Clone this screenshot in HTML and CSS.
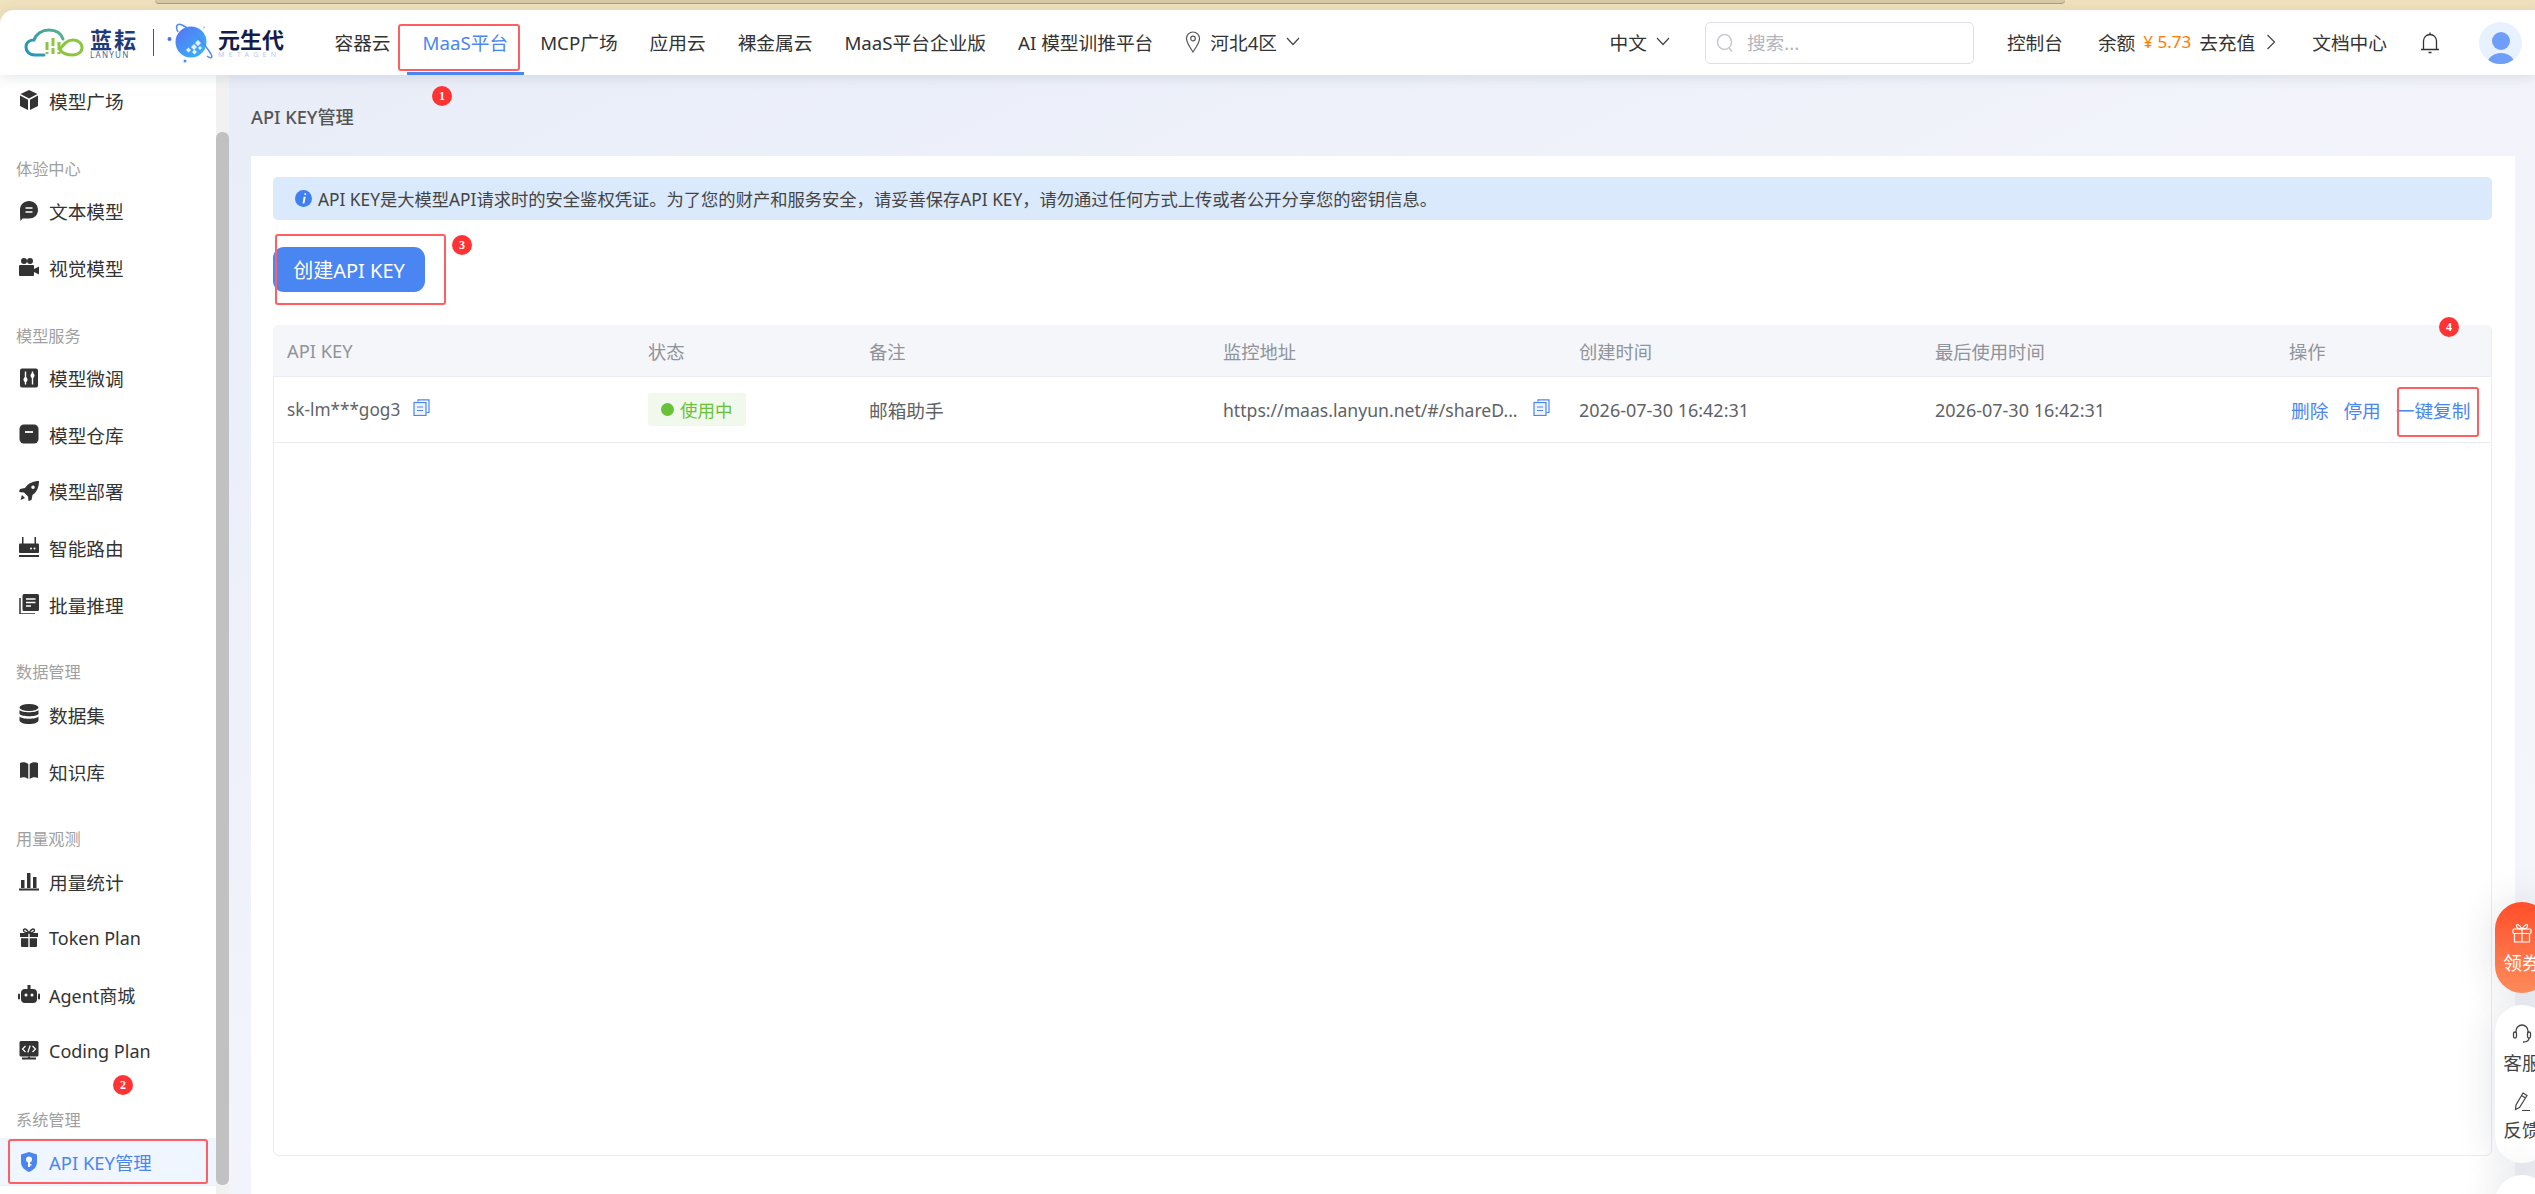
FILE: index.html
```html
<!DOCTYPE html>
<html lang="zh-CN">
<head>
    <meta charset="utf-8">
    <title>API KEY管理</title>
    <link rel="stylesheet" href="styles.css">
</head>
<body>
<div class="topstrip"><div class="topstrip_tab"></div></div>

<header class="header">
    <div class="logo">
        <svg class="logo_cloud" width="60" height="30" viewBox="0 0 60 30" fill="none">
            <path d="M20 27H11C5 27 2 23 2 19C2 14 6 12 10 12C12 6 18 2 25 2C32 2 37 5 39 11" stroke="url(#cloudgrad)" stroke-width="3" stroke-linecap="round"/>
            <path d="M36 22C39 26 44 27 49 27C54 27 58 24 58 19.500C58 15 54 12 49 12C43 12 40 16 36 21" stroke="#8cc63f" stroke-width="3" stroke-linecap="round"/>
            <path d="M23 14V26M29 10V26M35 14V26" stroke="#8cc63f" stroke-width="3" stroke-dasharray="8 2"/>
            <defs>
                <linearGradient id="cloudgrad" x1="0" y1="30" x2="40" y2="0" gradientUnits="userSpaceOnUse">
                    <stop stop-color="#1c8fc0"/><stop offset="1" stop-color="#5db58a"/>
                </linearGradient>
            </defs>
        </svg>
        <div class="logo_word">
            <span class="logo_cn">蓝耘</span>
            <span class="logo_en">LANYUN</span>
        </div>
        <div class="logo_line"></div>
        <svg class="logo_planet" width="46" height="40" viewBox="0 0 46 40" fill="none">
            <defs>
                <linearGradient id="planetgrad" x1="8" y1="4" x2="36" y2="34" gradientUnits="userSpaceOnUse">
                    <stop stop-color="#5a6ff5"/><stop offset="1" stop-color="#35b6f5"/>
                </linearGradient>
            </defs>
            <circle cx="24" cy="19" r="15.500" fill="url(#planetgrad)"/>
            <path d="M11 9C8 3 10 0 15 2C24 6 38 21 44 31C46 35 44 36 40 33" stroke="#4d8bf5" stroke-width="1.500"/>
            <path d="M28 20l3-3 3 3-3 3zM24 24l3-3 3 3-3 3zM19 27l2.500-2.500 2.500 2.500-2.500 2.500zM25 29l2.500-2.500 2.500 2.500-2.500 2.500zM31 25l2-2 2 2-2 2z" fill="#fff" opacity=".85"/>
            <circle cx="2.500" cy="16" r="2" fill="#4d6ff5"/>
            <circle cx="18" cy="38" r="1.500" fill="#4d8bf5"/>
            <circle cx="37" cy="4.500" r="1" fill="#7fd0f5"/>
        </svg>
        <div class="logo_word logo_word2">
            <span class="logo_cn2">元生代</span>
            <span class="logo_en2">METAGEN</span>
        </div>
    </div>

    <nav class="nav">
        <a class="nav_item">容器云</a>
        <a class="nav_item nav_active">MaaS平台</a>
        <a class="nav_item">MCP广场</a>
        <a class="nav_item">应用云</a>
        <a class="nav_item">裸金属云</a>
        <a class="nav_item">MaaS平台企业版</a>
        <a class="nav_item">AI 模型训推平台</a>
        <a class="nav_item nav_region">
            <svg width="16" height="24" viewBox="0 0 16 24" fill="none" stroke="#555" stroke-width="1.200"><path d="M8 22C4 16 1.500 12.500 1.500 8.500A6.500 6.500 0 0 1 14.500 8.500C14.500 12.500 12 16 8 22Z"/><circle cx="8" cy="8.500" r="2.300"/></svg>
            <span>河北4区</span>
            <svg class="chevron" width="14" height="9" viewBox="0 0 14 9" fill="none" stroke="#444" stroke-width="1.200"><path d="M1 1l6 6.500L13 1"/></svg>
        </a>
    </nav>

    <div class="header_right">
        <div class="lang">
            <span>中文</span>
            <svg width="14" height="9" viewBox="0 0 14 9" fill="none" stroke="#444" stroke-width="1.200"><path d="M1 1l6 6.500L13 1"/></svg>
        </div>
        <div class="search">
            <svg width="18" height="20" viewBox="0 0 18 20" fill="none" stroke="#c8c9d0" stroke-width="1.500"><ellipse cx="8.500" cy="9" rx="7" ry="7.500"/><path d="M13 15l3 3.500"/></svg>
            <span>搜索...</span>
        </div>
        <a class="head_link">控制台</a>
        <div class="balance">
            <span>余额</span>
            <span class="balance_num">¥ 5.73</span>
            <span>去充值</span>
            <svg width="10" height="20" viewBox="0 0 10 20" fill="none" stroke="#444" stroke-width="1.200"><path d="M1.500 3l7 7-7 7"/></svg>
        </div>
        <a class="head_link head_docs">文档中心</a>
        <svg class="bell" width="20" height="22" viewBox="0 0 20 22" fill="none" stroke="#333" stroke-width="1.300"><path d="M3.500 17V9A6.500 6.500 0 0 1 16.500 9V17M1 17.500H19"/><path d="M10 .5V2.500M8.500 20.500H11.500"/></svg>
        <div class="avatar"><span class="avatar_head"></span><span class="avatar_body"></span></div>
    </div>
</header>

<div class="layout">
    <aside class="sidebar">
        <div class="menu">
            <a class="menu_item">
                <svg width="20" height="20" viewBox="0 0 20 20" fill="#333"><path d="M10 0l8.500 4L10 8.500 1.500 4zM1 5.500l8 4.300V20l-8-4zM19 5.500l-8 4.300V20l8-4z"/></svg>
                模型广场
            </a>
            <div class="menu_head">体验中心</div>
            <a class="menu_item">
                <svg width="20" height="20" viewBox="0 0 20 20"><path d="M10 0C15 0 19 3.500 19 9C19 14 15 17.500 10 17.500H3.500L1.500 20C1 17 1 12 1 9C1 3.500 5 0 10 0Z" fill="#333"/><path d="M6.500 7h7M6.500 11h7" stroke="#fff" stroke-width="1.600"/></svg>
                文本模型
            </a>
            <a class="menu_item">
                <svg width="20" height="20" viewBox="0 0 20 20" fill="#333"><circle cx="5" cy="4" r="3"/><circle cx="11" cy="4" r="3"/><rect x="0" y="8" width="15" height="11" rx="1"/><path d="M15 12l5-2.500v8L15 15z"/></svg>
                视觉模型
            </a>
            <div class="menu_head">模型服务</div>
            <a class="menu_item">
                <svg width="20" height="20" viewBox="0 0 20 20"><rect x="1" y="0.500" width="18" height="19" rx="2" fill="#333"/><path d="M6.500 3.500v13M13.500 3.500v13" stroke="#fff" stroke-width="1.400"/><ellipse cx="6.500" cy="11.500" rx="2" ry="2.500" fill="#fff"/><ellipse cx="13.500" cy="7.500" rx="2" ry="2.500" fill="#fff"/></svg>
                模型微调
            </a>
            <a class="menu_item">
                <svg width="20" height="20" viewBox="0 0 20 20"><rect x="0.500" y="0.500" width="19" height="19" rx="4.500" fill="#333"/><path d="M6 8h8" stroke="#fff" stroke-width="1.800"/></svg>
                模型仓库
            </a>
            <a class="menu_item">
                <svg width="20" height="20" viewBox="0 0 20 20" fill="#333"><path d="M20 0C14 0 9.500 2 6 7L1 8l-1 3 5 0.500 4 4 0.500 4.500 3-1 1-5C18 11 20 6 20 0ZM14 4.500A1.700 1.700 0 1 1 14 8A1.700 1.700 0 0 1 14 4.500Z"/><path d="M3 14l3 3-4.500 2z"/></svg>
                模型部署
            </a>
            <a class="menu_item">
                <svg width="20" height="20" viewBox="0 0 20 20" fill="#333"><rect x="0" y="6.500" width="20" height="9.500" rx="1"/><rect x="3" y="0" width="1.500" height="7"/><rect x="15.500" y="0" width="1.500" height="7"/><rect x="0" y="18" width="20" height="2"/><circle cx="12" cy="11.500" r="1" fill="#fff"/><circle cx="15.500" cy="11.500" r="1" fill="#fff"/></svg>
                智能路由
            </a>
            <a class="menu_item">
                <svg width="20" height="20" viewBox="0 0 20 20"><path d="M1 4v16h15" fill="none" stroke="#333" stroke-width="1.500"/><rect x="3.500" y="0" width="16.500" height="17" rx="1.500" fill="#333"/><path d="M7 5h9.500M7 8.500h9.500M7 12h5" stroke="#fff" stroke-width="1.500"/></svg>
                批量推理
            </a>
            <div class="menu_head">数据管理</div>
            <a class="menu_item">
                <svg width="20" height="20" viewBox="0 0 20 20" fill="#333"><ellipse cx="10" cy="3.500" rx="9.500" ry="3.500"/><path d="M.5 6c2 3 17 3 19 0v4c-2 3-17 3-19 0zM.5 12.500c2 3 17 3 19 0V16c0 2.500-4 4-9.500 4S.5 18.500.5 16z"/></svg>
                数据集
            </a>
            <a class="menu_item">
                <svg width="20" height="20" viewBox="0 0 20 20" fill="#333"><path d="M9.300 3C7 1 3 1 1 2V17C3 16 7 16 9.300 18ZM10.700 3C13 1 17 1 19 2V17C17 16 13 16 10.700 18Z"/></svg>
                知识库
            </a>
            <div class="menu_head">用量观测</div>
            <a class="menu_item">
                <svg width="20" height="20" viewBox="0 0 20 20" fill="#333"><rect x="2" y="9" width="3.500" height="8"/><rect x="8" y="2" width="3.500" height="15"/><rect x="14" y="6" width="3.500" height="11"/><rect x="0" y="17.500" width="20" height="2"/></svg>
                用量统计
            </a>
            <a class="menu_item menu_en">
                <svg width="20" height="20" viewBox="0 0 20 20" fill="#333"><path d="M1 5h8.300v4H1zM10.700 5H19v4h-8.300zM2 10.300h7.300V19H3a1 1 0 0 1-1-1zM10.700 10.300H18V18a1 1 0 0 1-1 1h-6.300z"/><path d="M10 5C8 1 5 0 4.500 2S7 4.500 10 5C13 4.500 16 4 15.500 2S12 1 10 5Z" fill="none" stroke="#333" stroke-width="1.400"/></svg>
                Token Plan
            </a>
            <a class="menu_item menu_en">
                <svg class="icon_wide" width="22" height="20" viewBox="0 0 22 20" fill="#333"><rect x="3" y="4" width="16" height="14" rx="4"/><rect x="9.500" y="0" width="3" height="4"/><rect x="0" y="8.500" width="2" height="6" rx="1"/><rect x="20" y="8.500" width="2" height="6" rx="1"/><circle cx="8" cy="10" r="1.500" fill="#fff"/><circle cx="14" cy="10" r="1.500" fill="#fff"/></svg>
                Agent商城
            </a>
            <a class="menu_item menu_en">
                <svg width="20" height="20" viewBox="0 0 20 20"><rect x="0.500" y="0" width="19" height="15.500" rx="1.500" fill="#333"/><path d="M6.500 5L3.500 8l3 3M13.500 5l3 3-3 3M11.200 4.500l-2.400 7" fill="none" stroke="#fff" stroke-width="1.200"/><path d="M3 17.500h14M10 15.500v2" stroke="#333" stroke-width="1.800"/></svg>
                Coding Plan
            </a>
            <div class="menu_head">系统管理</div>
            <a class="menu_item menu_active">
                <svg width="20" height="20" viewBox="0 0 20 20"><path d="M10 0L18 2.500V10C18 15 14.500 18 10 20C5.500 18 2 15 2 10V2.500Z" fill="#4a86f1"/><circle cx="10" cy="7.500" r="3" fill="#fff"/><path d="M9 9h2v6H9zM10 12h2.500v1.500H10z" fill="#fff"/></svg>
                API KEY管理
            </a>
        </div>
    </aside>
    <div class="scrollbar"><div class="scrollbar_thumb"></div></div>

    <main class="main">
        <div class="page_title">API KEY管理</div>
        <section class="card">
            <div class="alert">
                <svg width="17" height="17" viewBox="0 0 17 17"><circle cx="8.500" cy="8.500" r="8.500" fill="#3f7ff0"/><path d="M9.500 3.200h1.600v1.800H9.500zM8.700 6.800h2l-1.300 6.800h-1.800z" fill="#fff"/></svg>
                <span>API KEY是大模型API请求时的安全鉴权凭证。为了您的财产和服务安全，请妥善保存API KEY，请勿通过任何方式上传或者公开分享您的密钥信息。</span>
            </div>
            <button class="btn_create">创建API KEY</button>

            <div class="table">
                <div class="table_row table_head">
                    <div class="cell">API KEY</div>
                    <div class="cell">状态</div>
                    <div class="cell">备注</div>
                    <div class="cell">监控地址</div>
                    <div class="cell">创建时间</div>
                    <div class="cell">最后使用时间</div>
                    <div class="cell">操作</div>
                </div>
                <div class="table_row table_body">
                    <div class="cell cell_key">sk-lm***gog3
                        <svg class="copy" width="17" height="17" viewBox="0 0 17 17" fill="none" stroke="#4a86f1" stroke-width="1.200"><path d="M5 2.500V.8H16V13.500H13.500"/><rect x="1" y="3.500" width="12" height="13" fill="#eef3fe"/><path d="M4 8h6M4 11.500h6"/></svg>
                    </div>
                    <div class="cell"><span class="tag"><i class="tag_dot"></i>使用中</span></div>
                    <div class="cell">邮箱助手</div>
                    <div class="cell cell_url">https://maas.lanyun.net/#/shareD...
                        <svg class="copy copy_url" width="17" height="17" viewBox="0 0 17 17" fill="none" stroke="#4a86f1" stroke-width="1.200"><path d="M5 2.500V.8H16V13.500H13.500"/><rect x="1" y="3.500" width="12" height="13" fill="#eef3fe"/><path d="M4 8h6M4 11.500h6"/></svg>
                    </div>
                    <div class="cell cell_date">2026-07-30 16:42:31</div>
                    <div class="cell cell_date">2026-07-30 16:42:31</div>
                    <div class="cell cell_ops"><a>删除</a><a>停用</a><a>一键复制</a></div>
                </div>
            </div>
        </section>
    </main>
</div>

<!-- 右侧悬浮按钮 -->
<div class="float_bar">
    <div class="float_item float_coupon">
        <svg width="20" height="20" viewBox="0 0 20 20" fill="none" stroke="#fff" stroke-width="1.200"><rect x="1" y="6" width="18" height="4.500" rx="1"/><path d="M2.500 10.500V19H17.500V10.500M10 6V19M10 6C7 1 4.500 .5 4.500 3S7 6 10 6C13 6 15.500 5.500 15.500 3S13 1 10 6Z"/></svg>
        <span>领券</span>
    </div>
    <div class="float_item float_white">
        <svg width="20" height="20" viewBox="0 0 20 20" fill="none" stroke="#444" stroke-width="1.300"><path d="M4 10V8A6 6 0 0 1 16 8V10"/><rect x="1.500" y="9" width="3" height="6" rx="1.500"/><rect x="15.500" y="9" width="3" height="6" rx="1.500"/><path d="M17 15C17 18 14 19 11 19"/></svg>
        <span>客服</span>
        <svg class="float_pen" width="20" height="20" viewBox="0 0 20 20" fill="none" stroke="#444" stroke-width="1.200"><path d="M11 1l4 2.500-7.500 12-4 2 .5-4.500zM9.500 3.500l4 2.500M10 18.500h8"/></svg>
        <span class="float_last">反馈</span>
    </div>
    <div class="float_item float_rest"></div>
</div>

<!-- 截图上的红色标注 -->
<div class="mark mark1"></div>
<div class="mark mark2"></div>
<div class="mark mark3"></div>
<div class="mark mark4"></div>
<div class="dot dot1">1</div>
<div class="dot dot2">2</div>
<div class="dot dot3">3</div>
<div class="dot dot4">4</div>
</body>
</html>
```

FILE: styles.css
```css
*{box-sizing: border-box;}
html,body{margin:0;padding:0;}
body{
    width:2535px;height:1194px;overflow:hidden;position:relative;
    display:flex;flex-direction:column;
    background:#f0e2bd;
    font-family:"Noto Sans","Noto Sans CJK SC",sans-serif;
    font-size:18.700px;color:#333;
}
a{text-decoration:none;color:inherit;}

/* 顶部浏览器残留条 */
.topstrip{height:10px;flex:none;background:#f0e2bd;}
.topstrip_tab{
    width:1910px;height:4px;margin-left:155px;
    background:#d8cba8;border-bottom:1px solid #a89c80;border-radius:0 0 6px 6px;
}

/* header */
.header{
    height:65px;flex:none;display:flex;align-items:center;
    background:#fff;border-radius:14px 0 0 0;
    position:relative;z-index:5;
    box-shadow:0 2px 14px rgba(60,70,100,.14);
}
.logo{width:318.500px;flex:none;display:flex;align-items:center;padding-left:24px;}
.logo_cloud{flex:none;}
.logo_word{display:flex;flex-direction:column;margin-left:6px;width:48px;}
.logo_cn{font-size:22px;line-height:22px;font-weight:700;color:#1f3c7a;letter-spacing:2px;font-family:"Noto Sans CJK SC",sans-serif;}
.logo_en{font-size:8px;line-height:8px;letter-spacing:1.300px;color:#3a6a9a;margin-top:2px;}
.logo_line{width:1px;height:27px;background:#555;margin:0 13px 0 15px;}
.logo_planet{flex:none;}
.logo_word2{margin-left:5px;width:70px;}
.logo_cn2{font-size:22px;line-height:22px;font-weight:700;color:#141c4a;font-family:"Noto Sans CJK SC",sans-serif;}
.logo_en2{font-size:7px;line-height:7px;letter-spacing:4.300px;color:#b9c6ee;margin-top:2px;}

.nav{display:flex;height:100%;align-items:stretch;}
.nav_item{
    display:flex;align-items:center;padding:0 16px;
    border-top:1px solid transparent;border-bottom:3px solid transparent;
    white-space:nowrap;
}
.nav_active{color:#4a86f1;border-bottom-color:#4a86f1;}
.nav_region{gap:9px;}
.nav_region svg{flex:none;}

.header_right{margin-left:auto;display:flex;align-items:center;padding-right:13px;}
.lang{display:flex;align-items:center;gap:9px;margin-right:35px;margin-bottom:2px;}
.search{
    width:269px;height:42px;display:flex;align-items:center;gap:13px;
    padding-left:10px;border:1px solid #dfe0e6;border-radius:5px;
    color:#b4b5bc;margin-right:33px;
}
.search span{margin-bottom:2px;}
.head_link{white-space:nowrap;margin-bottom:2px;}
.balance{display:flex;align-items:center;gap:8px;margin-left:35px;margin-right:36px;margin-bottom:2px;}
.balance svg{margin-left:3px;}
.balance_num{color:#ff7a00;font-size:17px;}
.head_docs{margin-right:33px;}
.bell{flex:none;margin-right:39px;}
.avatar{
    width:43px;height:42px;border-radius:50%;background:#e8f1ff;overflow:hidden;
    display:flex;flex-direction:column;align-items:center;padding-top:10px;
}
.avatar_head{width:18px;height:18px;border-radius:50%;background:#6e9ef8;flex:none;}
.avatar_body{width:28px;height:24px;border-radius:50%;background:#6e9ef8;flex:none;margin-top:3px;}

/* 主体 */
.layout{flex:1;display:flex;min-height:0;}
.sidebar{width:216px;flex:none;background:#fff;overflow:hidden;}
.menu{display:flex;flex-direction:column;margin-top:-3px;}
.menu_item{
    height:47px;margin:4.800px 0;flex:none;
    display:flex;align-items:center;gap:10px;padding-left:19px;
    white-space:nowrap;
}
.menu_item svg{flex:none;}
.menu_item .icon_wide{margin:0 -1px;}
.menu_en{font-size:18px;}
.menu_active{color:#4a86f1;background:#eff6ff;margin-top:5px;font-size:18.400px;box-shadow:0 1px 0 #eee;}
.menu_head{
    height:53.800px;flex:none;padding-top:29px;
    font-size:16.200px;line-height:22px;color:#a0a0a0;padding-left:16px;
}
.scrollbar{width:13px;flex:none;background:#f1f1f1;}
.scrollbar_thumb{width:13px;height:1053px;margin-top:57px;background:#c1c1c1;border-radius:6px;}

.main{
    flex:1;min-width:0;display:flex;flex-direction:column;
    padding:0 20px 0 22px;
    background:linear-gradient(to bottom right,#e8edf8 0%,#f3f4fb 50%,#f5f6fa 100%);
}
.page_title{height:81px;flex:none;display:flex;align-items:center;font-size:18.200px;font-weight:500;color:#555;}
.card{flex:1;background:#fff;padding:21px 23px 38px 22px;display:flex;flex-direction:column;min-height:0;}
.alert{
    height:43px;flex:none;display:flex;align-items:center;gap:6px;padding-left:22px;
    background:#dbe9fc;border-radius:5px;font-size:17.300px;color:#444;white-space:nowrap;
}
.btn_create{
    width:152px;height:45px;flex:none;margin-top:27px;
    border:0;border-radius:11px;background:#4a86f1;color:#fff;
    font:inherit;font-size:20px;padding:0;
}
.table{
    flex:1;margin-top:33px;min-height:0;
    border:1px solid #e9ecf3;border-radius:6px;
}
.table_row{
    display:grid;
    grid-template-columns:361px 221px 354px 356px 356px 354px 1fr;
    align-items:center;border-bottom:1px solid #e9ecf3;
    margin-left:-1px;
}
.table_head{height:52px;background:#f4f6fa;color:#909399;border-radius:6px 6px 0 0;margin-top:-1px;font-size:18.300px;}
.table_body{height:66px;color:#606266;}
.cell{padding-left:14px;white-space:nowrap;display:flex;align-items:center;}
.cell_key{font-size:17.200px;}
.cell_url{font-size:17.600px;}
.cell_date{font-size:18px;}
.copy{margin-left:13px;margin-top:-4px;flex:none;}
.copy_url{margin-left:15px;}
.tag{
    display:inline-flex;align-items:center;height:33px;padding:0 13px;gap:6px;
    background:#f0f9eb;border-radius:3px;color:#67c23a;font-size:17.500px;
}
.tag_dot{width:13px;height:13px;border-radius:50%;background:#67c23a;}
.cell_ops{gap:15px;color:#4a86f1;padding-left:16px;}

/* 右侧悬浮 */
.float_bar{
    position:absolute;left:2495px;top:902px;width:54px;
    display:flex;flex-direction:column;gap:12px;z-index:6;
}
.float_item{
    width:54px;display:flex;flex-direction:column;align-items:center;
    border-radius:28px;box-shadow:0 0 40px rgba(40,50,80,.14);
    white-space:nowrap;
}
.float_item span{line-height:26px;margin-top:7px;}
.float_coupon{
    height:91px;padding-top:21px;color:#fff;
    background:linear-gradient(180deg,#ff4e2a,#ff8d5c);
}
.float_white{height:158px;padding-top:18px;background:#fff;color:#444;}
.float_pen{margin-top:16px;}
.float_item .float_last{margin-top:5px;}
.float_rest{height:60px;background:#fff;}

/* 红色标注 */
.mark{position:absolute;border:2px solid #ff5e62;border-radius:3px;z-index:8;pointer-events:none;}
.mark1{left:398px;top:24px;width:122px;height:47px;}
.mark2{left:8px;top:1139px;width:200px;height:45px;}
.mark3{left:275px;top:234px;width:171px;height:71px;}
.mark4{left:2397px;top:387px;width:82px;height:50px;}
.dot{
    position:absolute;width:20px;height:20px;border-radius:50%;
    background:#ff3333;color:#fff;z-index:9;
    font:700 12px/20px "Liberation Serif",serif;text-align:center;
}
.dot1{left:432px;top:86px;}
.dot2{left:113px;top:1075px;}
.dot3{left:452px;top:235px;}
.dot4{left:2439px;top:317px;}
```
